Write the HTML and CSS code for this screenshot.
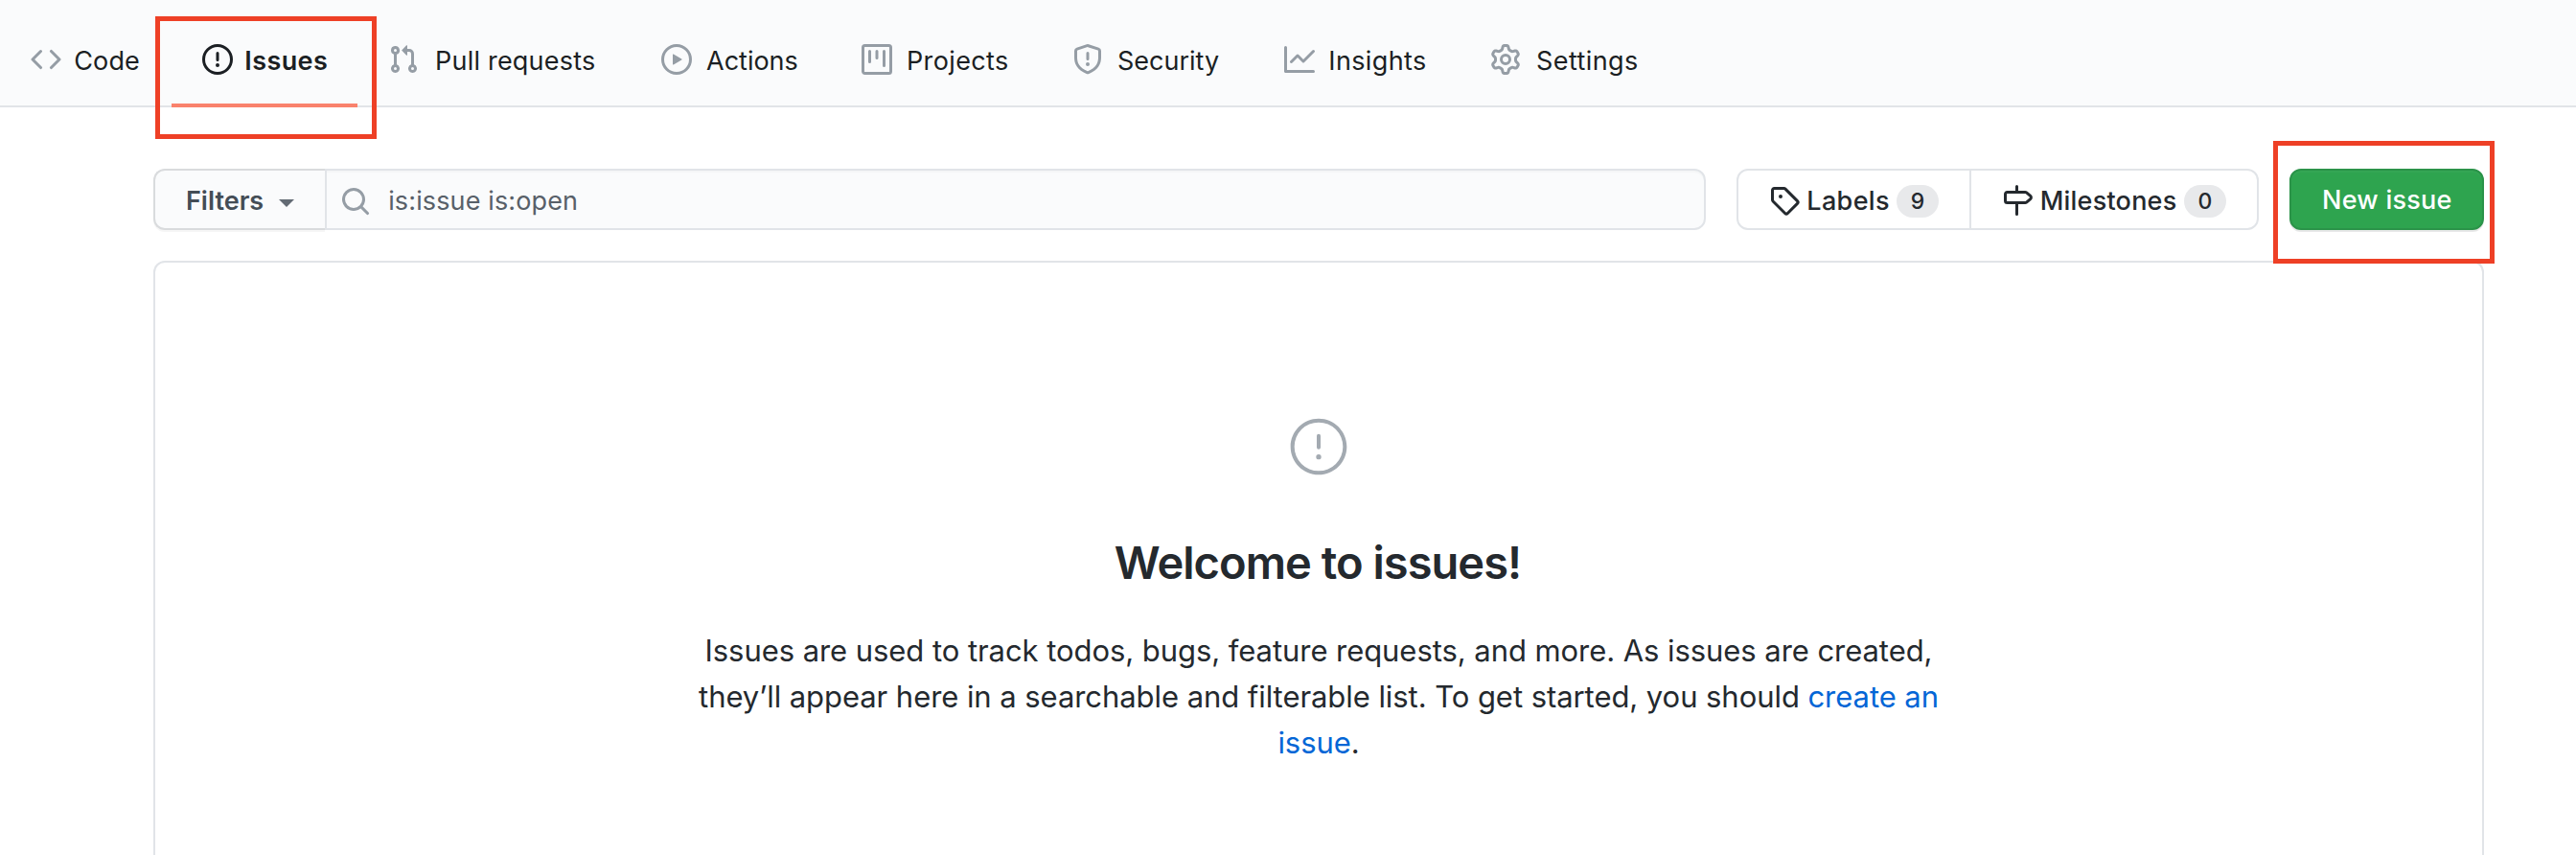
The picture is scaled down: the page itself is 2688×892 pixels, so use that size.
FILE: index.html
```html
<!DOCTYPE html>
<html lang="en">
<head>
<meta charset="utf-8">
<title>Issues</title>
<link rel="stylesheet" href="styles.css">
</head>
<body>
<nav class="repo-nav">
  <a class="tab tab-code"><svg class="icon" viewBox="0 0 16 16"><path fill-rule="evenodd" d="M4.72 3.22a.75.75 0 011.06 1.06L2.06 8l3.72 3.72a.75.75 0 11-1.06 1.06L.47 8.53a.75.75 0 010-1.06l4.25-4.25zm6.56 0a.75.75 0 10-1.06 1.06L13.94 8l-3.72 3.72a.75.75 0 101.06 1.06l4.25-4.25a.75.75 0 000-1.06l-4.25-4.25z"/></svg><span>Code</span></a>
  <a class="tab tab-issues selected"><svg class="icon" viewBox="0 0 16 16"><path fill-rule="evenodd" d="M8 1.5a6.5 6.5 0 100 13 6.5 6.5 0 000-13zM0 8a8 8 0 1116 0A8 8 0 010 8zm9 3a1 1 0 11-2 0 1 1 0 012 0zm-.25-6.25a.75.75 0 00-1.5 0v3.5a.75.75 0 001.5 0v-3.5z"/></svg><span>Issues</span><i class="highlight highlight-tab"></i></a>
  <a class="tab tab-pulls"><svg class="icon" viewBox="0 0 16 16"><path fill-rule="evenodd" d="M7.177 3.073L9.573.677A.25.25 0 0110 .854v4.792a.25.25 0 01-.427.177L7.177 3.427a.25.25 0 010-.354zM3.75 2.5a.75.75 0 100 1.5.75.75 0 000-1.5zm-2.25.75a2.25 2.25 0 113 2.122v5.256a2.251 2.251 0 11-1.5 0V5.372A2.25 2.25 0 011.5 3.25zM11 2.5h-1V4h1a1 1 0 011 1v5.628a2.251 2.251 0 101.5 0V5A2.5 2.5 0 0011 2.5zm1 10.25a.75.75 0 111.5 0 .75.75 0 01-1.5 0zM3.75 12a.75.75 0 100 1.5.75.75 0 000-1.5z"/></svg><span>Pull requests</span></a>
  <a class="tab tab-actions"><svg class="icon" viewBox="0 0 16 16"><path fill-rule="evenodd" d="M1.5 8a6.5 6.5 0 1113 0 6.5 6.5 0 01-13 0zM8 0a8 8 0 100 16A8 8 0 008 0zM6.379 5.227A.25.25 0 006 5.442v5.117a.25.25 0 00.379.214l4.264-2.559a.25.25 0 000-.428L6.379 5.227z"/></svg><span>Actions</span></a>
  <a class="tab tab-projects"><svg class="icon" viewBox="0 0 16 16"><path fill-rule="evenodd" d="M1.75 0A1.75 1.75 0 000 1.75v12.5C0 15.216.784 16 1.75 16h12.5A1.75 1.75 0 0016 14.25V1.75A1.75 1.75 0 0014.25 0H1.75zM1.5 1.75a.25.25 0 01.25-.25h12.5a.25.25 0 01.25.25v12.5a.25.25 0 01-.25.25H1.75a.25.25 0 01-.25-.25V1.75zM11.75 3a.75.75 0 00-.75.75v7.5a.75.75 0 001.5 0v-7.5a.75.75 0 00-.75-.75zm-8.25.75a.75.75 0 011.5 0v5.5a.75.75 0 01-1.5 0v-5.5zM8 3a.75.75 0 00-.75.75v3.5a.75.75 0 001.5 0v-3.5A.75.75 0 008 3z"/></svg><span>Projects</span></a>
  <a class="tab tab-security"><svg class="icon" viewBox="0 0 16 16"><path fill-rule="evenodd" d="M7.467.133a1.75 1.75 0 011.066 0l5.25 1.68A1.75 1.75 0 0115 3.48V7c0 1.566-.32 3.182-1.303 4.682-.983 1.498-2.585 2.813-5.032 3.855a1.7 1.7 0 01-1.33 0c-2.447-1.042-4.049-2.357-5.032-3.855C1.32 10.182 1 8.566 1 7V3.48a1.75 1.75 0 011.217-1.667l5.25-1.68zm.61 1.429a.25.25 0 00-.153 0l-5.25 1.68a.25.25 0 00-.174.238V7c0 1.358.275 2.666 1.057 3.86.784 1.194 2.121 2.34 4.366 3.297a.2.2 0 00.154 0c2.245-.956 3.582-2.104 4.366-3.298C13.225 9.666 13.5 8.36 13.5 7V3.48a.25.25 0 00-.174-.237l-5.25-1.68zM9 10.5a1 1 0 11-2 0 1 1 0 012 0zm-.25-5.75a.75.75 0 10-1.5 0v3a.75.75 0 001.5 0v-3z"/></svg><span>Security</span></a>
  <a class="tab tab-insights"><svg class="icon" viewBox="0 0 16 16"><path fill-rule="evenodd" d="M1.5 1.75a.75.75 0 00-1.5 0v12.5c0 .414.336.75.75.75h14.5a.75.75 0 000-1.5H1.5V1.75zm14.28 2.53a.75.75 0 00-1.06-1.06L10 7.94 7.53 5.47a.75.75 0 00-1.06 0L3.22 8.72a.75.75 0 001.06 1.06L7 7.06l2.47 2.47a.75.75 0 001.06 0l5.25-5.25z"/></svg><span>Insights</span></a>
  <a class="tab tab-settings"><svg class="icon" viewBox="0 0 16 16"><path fill-rule="evenodd" d="M7.429 1.525a6.593 6.593 0 011.142 0c.036.003.108.036.137.146l.289 1.105c.147.56.55.967.997 1.189.174.086.341.183.501.29.417.278.97.423 1.53.27l1.102-.303c.11-.03.175.016.195.046.219.31.41.641.573.989.014.031.022.11-.059.19l-.815.806c-.411.406-.562.957-.53 1.456a4.588 4.588 0 010 .582c-.032.499.119 1.05.53 1.456l.815.806c.08.08.073.159.059.19a6.494 6.494 0 01-.573.99c-.02.029-.086.074-.195.045l-1.103-.303c-.559-.153-1.112-.008-1.529.27-.16.107-.327.204-.5.29-.449.222-.851.628-.998 1.189l-.289 1.105c-.029.11-.101.143-.137.146a6.613 6.613 0 01-1.142 0c-.036-.003-.108-.037-.137-.146l-.289-1.105c-.147-.56-.55-.967-.997-1.189a4.502 4.502 0 01-.501-.29c-.417-.278-.97-.423-1.53-.27l-1.102.303c-.11.03-.175-.016-.195-.046a6.492 6.492 0 01-.573-.989c-.014-.031-.022-.11.059-.19l.815-.806c.411-.406.562-.957.53-1.456a4.587 4.587 0 010-.582c.032-.499-.119-1.05-.53-1.456l-.815-.806c-.08-.08-.073-.159-.059-.19a6.44 6.44 0 01.573-.99c.02-.029.086-.075.195-.045l1.103.303c.559.153 1.112.008 1.529-.27.16-.107.327-.204.5-.29.449-.222.851-.628.998-1.189l.289-1.105c.029-.11.101-.143.137-.146zM8 0c-.236 0-.47.01-.701.03-.743.065-1.29.615-1.458 1.261l-.29 1.106c-.017.066-.078.158-.211.224a5.994 5.994 0 00-.668.386c-.123.082-.233.09-.3.071L3.27 2.776c-.644-.177-1.392.02-1.82.63a7.977 7.977 0 00-.704 1.217c-.315.675-.111 1.422.363 1.891l.815.806c.05.048.098.147.088.294a6.084 6.084 0 000 .772c.01.147-.038.246-.088.294l-.815.806c-.474.469-.678 1.216-.363 1.891.2.428.436.835.704 1.218.428.609 1.176.806 1.82.63l1.103-.303c.066-.019.176-.011.299.071.213.143.436.272.668.386.133.066.194.158.212.224l.289 1.106c.169.646.715 1.196 1.458 1.26a8.094 8.094 0 001.402 0c.743-.064 1.29-.614 1.458-1.26l.29-1.106c.017-.066.078-.158.211-.224a5.98 5.98 0 00.668-.386c.123-.082.233-.09.3-.071l1.102.302c.644.177 1.392-.02 1.82-.63.268-.382.505-.789.704-1.217.315-.675.111-1.422-.364-1.891l-.814-.806c-.05-.048-.098-.147-.088-.294a6.1 6.1 0 000-.772c-.01-.147.039-.246.088-.294l.814-.806c.475-.469.679-1.216.364-1.891a7.992 7.992 0 00-.704-1.218c-.428-.609-1.176-.806-1.82-.63l-1.103.303c-.066.019-.176.011-.299-.071a5.991 5.991 0 00-.668-.386c-.133-.066-.194-.158-.212-.224L10.16 1.29C9.99.645 9.444.095 8.701.031A8.094 8.094 0 008 0zm1.5 8a1.5 1.5 0 11-3 0 1.5 1.5 0 013 0zM11 8a3 3 0 11-6 0 3 3 0 016 0z"/></svg><span>Settings</span></a>
</nav>
<main class="content">
  <div class="toolbar">
    <div class="filter-bar">
      <button class="filters"><span>Filters</span><i class="caret"></i></button>
      <div class="search"><svg class="icon" viewBox="0 0 16 16"><path fill-rule="evenodd" d="M11.5 7a4.499 4.499 0 11-8.998 0A4.499 4.499 0 0111.5 7zm-.82 4.74a6 6 0 111.06-1.06l3.04 3.04a.75.75 0 11-1.06 1.06l-3.04-3.04z"/></svg><span>is:issue is:open</span></div>
    </div>
    <div class="subnav">
      <a class="subnav-item labels"><svg class="icon" viewBox="0 0 16 16"><path fill-rule="evenodd" d="M2.5 7.775V2.75a.25.25 0 01.25-.25h5.025a.25.25 0 01.177.073l6.25 6.25a.25.25 0 010 .354l-5.025 5.025a.25.25 0 01-.354 0l-6.25-6.25a.25.25 0 01-.073-.177zm-1.5 0V2.75C1 1.784 1.784 1 2.75 1h5.025c.464 0 .91.184 1.238.513l6.25 6.25a1.75 1.75 0 010 2.474l-5.026 5.026a1.75 1.75 0 01-2.474 0l-6.25-6.25A1.75 1.75 0 011 7.775zM6 5a1 1 0 100 2 1 1 0 000-2z"/></svg><span class="name">Labels</span><span class="counter">9</span></a>
      <a class="subnav-item milestones"><svg class="icon" viewBox="0 0 16 16"><path fill-rule="evenodd" d="M7.75 0a.75.75 0 01.75.75V3h3.634c.414 0 .814.147 1.13.414l2.07 1.75a1.75 1.75 0 010 2.672l-2.07 1.75a1.75 1.75 0 01-1.13.414H8.5v5.25a.75.75 0 11-1.5 0V10H2.75A1.75 1.75 0 011 8.25v-3.5C1 3.784 1.784 3 2.75 3H7V.75A.75.75 0 017.75 0zm0 8.5h4.384a.25.25 0 00.161-.06l2.07-1.75a.25.25 0 000-.38l-2.07-1.75a.25.25 0 00-.161-.06H2.75a.25.25 0 00-.25.25v3.5c0 .138.112.25.25.25h5z"/></svg><span class="name">Milestones</span><span class="counter">0</span></a>
    </div>
    <div class="new-issue-wrap"><button class="new-issue">New issue</button><i class="highlight highlight-button"></i></div>
  </div>
  <section class="blankslate">
    <svg class="big-icon" viewBox="0 0 24 24"><path fill-rule="evenodd" d="M12 2.5a9.5 9.5 0 100 19 9.5 9.5 0 000-19zM1 12C1 5.925 5.925 1 12 1s11 4.925 11 11-4.925 11-11 11S1 18.075 1 12zM12 7a.75.75 0 01.75.75v4.5a.75.75 0 01-1.5 0v-4.5A.75.75 0 0112 7zm0 10a1 1 0 100-2 1 1 0 000 2z"/></svg>
    <h3>Welcome to issues!</h3>
    <p>Issues are used to track todos, bugs, feature requests, and more. As issues are created,<br>they’ll appear here in a searchable and filterable list. To get started, you should <a>create an<br>issue</a>.</p>
  </section>
</main>
</body>
</html>
```
FILE: styles.css
```css
* { box-sizing: border-box; }

body {
  margin: 0;
  height: 892px;
  background: #fff;
  color: #24292e;
  font-family: Inter, "Liberation Sans", sans-serif;
  font-size: 27px;
  line-height: 32px;
  white-space: nowrap;
}

.icon {
  display: block;
  flex: none;
  width: 32px;
  height: 32px;
  fill: #959da5;
}

/* Repository tabs */
.repo-nav {
  display: flex;
  height: 112px;
  background: #fafbfc;
  border-bottom: 2px solid #e1e4e8;
}
.tab {
  position: relative;
  display: flex;
  flex: none;
  align-items: flex-start;
  gap: 15px;
  height: 112px;
  padding: 46px 0 0 32px;
  color: #1b1f23;
}
.tab span { padding-top: 2px; }
.tab-code { width: 179px; gap: 13.3px; letter-spacing: 0.085px; }
.tab-issues { width: 194px; gap: 12.3px; letter-spacing: 0.413px; }
.tab-pulls { width: 285px; gap: 17px; letter-spacing: 0.217px; }
.tab-actions { width: 209px; }
.tab-projects { width: 220px; letter-spacing: 0.368px; }
.tab-security { width: 221px; }
.tab-insights { width: 215px; gap: 14.3px; letter-spacing: 0.373px; }
.tab-settings { gap: 16px; letter-spacing: 0.411px; }
.selected {
  font-weight: 600;
  border-bottom: 4px solid #f9826c;
}
.selected .icon { fill: #1b1f23; }

/* Red frames drawn over the page */
.highlight {
  position: absolute;
  width: 231px;
  height: 128px;
  border: 5px solid #ee4026;
}
.highlight-tab { left: -17px; top: 17px; }
.highlight-button { left: -17px; top: -29px; }

.content { padding: 64px 96px 0 160px; }

/* Search and actions row */
.toolbar { display: flex; height: 64px; }
.filter-bar { display: flex; width: 1620px; margin-right: 32px; }
.filters {
  display: flex;
  width: 179px;
  padding: 16px 0 0 32px;
  border: 2px solid #d9dbdd;
  border-right: 0;
  border-radius: 12px 0 0 12px;
  background: #fafbfc;
  box-shadow: 0 2px 0 rgba(27, 31, 35, 0.04);
  color: #444d56;
  font: 600 27px/32px Inter, sans-serif;
}
.caret {
  margin: 14px 0 0 16.1px;
  border: 8px solid transparent;
  border-top-color: #636b74;
  border-bottom: 0;
}
.search {
  display: flex;
  flex: 1;
  gap: 18.2px;
  padding: 16px 0 0 14px;
  border: 2px solid #e1e4e8;
  border-radius: 0 12px 12px 0;
  background: #fafbfc;
  box-shadow: inset 0 2px 0 rgba(225, 228, 232, 0.2);
  color: #586069;
  letter-spacing: 0.13px;
}

.subnav {
  display: flex;
  width: 545px;
  margin-right: 32px;
  border: 2px solid #e1e4e8;
  border-radius: 12px;
}
.subnav-item {
  display: flex;
  padding: 15px 0 0 32px;
  font-weight: 500;
}
.subnav-item .icon { fill: #24292e; }
.labels { width: 243px; border-right: 2px solid #e1e4e8; }
.name { flex: none; padding-top: 1px; }
.labels .name { width: 93.7px; margin-left: 7.3px; letter-spacing: 0.35px; }
.milestones .name { width: 150.3px; margin-left: 7.7px; letter-spacing: 0.224px; }
.counter {
  flex: none;
  width: 44px;
  height: 34px;
  border-radius: 17px;
  background: #e8e9eb;
  font-size: 23px;
  line-height: 35px;
  text-align: center;
}

.new-issue-wrap { position: relative; width: 203px; }
.new-issue {
  width: 203px;
  height: 64px;
  padding: 2px 0 0 32px;
  border: 2px solid #2b9349;
  border-radius: 12px;
  background: #2ea44f;
  box-shadow: 0 2px 0 rgba(27, 31, 35, 0.1), inset 0 2px 0 rgba(255, 255, 255, 0.03);
  color: #fff;
  font: 500 27px/58px Inter, sans-serif;
  letter-spacing: 0.244px;
  text-align: left;
}

/* Empty state */
.blankslate {
  display: flex;
  flex-direction: column;
  align-items: center;
  height: 620px;
  margin-top: 32px;
  padding-top: 160px;
  border: 2px solid #e1e4e8;
  border-bottom: 0;
  border-radius: 12px 12px 0 0;
}
.big-icon { display: block; width: 64px; height: 64px; fill: #a3aab1; }
h3 {
  margin: 53px 0 0;
  padding-right: 2px;
  font-size: 47px;
  font-weight: 600;
  line-height: 72px;
  letter-spacing: -0.96px;
}
p {
  margin: 32px 0 0;
  font-size: 31px;
  line-height: 48px;
  letter-spacing: -0.06px;
  text-align: center;
}
p a { color: #0366d6; }
```
